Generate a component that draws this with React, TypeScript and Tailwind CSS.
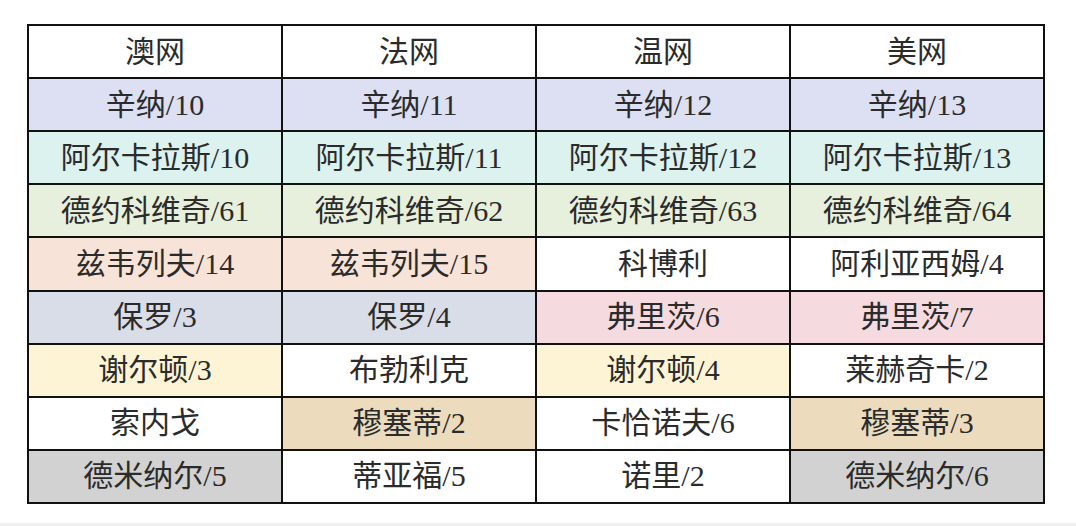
const lavender = 'bg-[#dce0f2]';
const mint = 'bg-[#dcf2ee]';
const green = 'bg-[#e7f0dc]';
const peach = 'bg-[#f7e3d7]';
const slate = 'bg-[#d9dde7]';
const yellow = 'bg-[#fcf4d4]';
const tan = 'bg-[#ecdcbd]';
const gray = 'bg-[#d2d2d2]';
const pink = 'bg-[#f5dbe0]';
const white = 'bg-white';

type Cell = [string, string];

const rows: Cell[][] = [
  [['澳网', white], ['法网', white], ['温网', white], ['美网', white]],
  [['辛纳/10', lavender], ['辛纳/11', lavender], ['辛纳/12', lavender], ['辛纳/13', lavender]],
  [['阿尔卡拉斯/10', mint], ['阿尔卡拉斯/11', mint], ['阿尔卡拉斯/12', mint], ['阿尔卡拉斯/13', mint]],
  [['德约科维奇/61', green], ['德约科维奇/62', green], ['德约科维奇/63', green], ['德约科维奇/64', green]],
  [['兹韦列夫/14', peach], ['兹韦列夫/15', peach], ['科博利', white], ['阿利亚西姆/4', white]],
  [['保罗/3', slate], ['保罗/4', slate], ['弗里茨/6', pink], ['弗里茨/7', pink]],
  [['谢尔顿/3', yellow], ['布勃利克', white], ['谢尔顿/4', yellow], ['莱赫奇卡/2', white]],
  [['索内戈', white], ['穆塞蒂/2', tan], ['卡恰诺夫/6', white], ['穆塞蒂/3', tan]],
  [['德米纳尔/5', gray], ['蒂亚福/5', white], ['诺里/2', white], ['德米纳尔/6', gray]],
];

export default function App() {
  return (
    <div className="w-[1076px] h-[526px] bg-white flex flex-col">
      <div className="flex-1 pt-[24px] pl-[27px]">
        <div
          className="w-[1018px] h-[480px] grid grid-cols-4 grid-rows-9 gap-[2px] p-[2px] bg-[#111]"
          style={{ fontFamily: '"Liberation Serif", "Noto Sans CJK SC", serif' }}
        >
          {rows.flat().map(([text, bg], i) => (
            <div
              key={i}
              className={`${bg} flex items-center justify-center text-[30px] leading-none text-[#2b2b2b]`}
            >
              {text}
            </div>
          ))}
        </div>
      </div>
      <div className="h-[3px] bg-[#efefef]" />
    </div>
  );
}
